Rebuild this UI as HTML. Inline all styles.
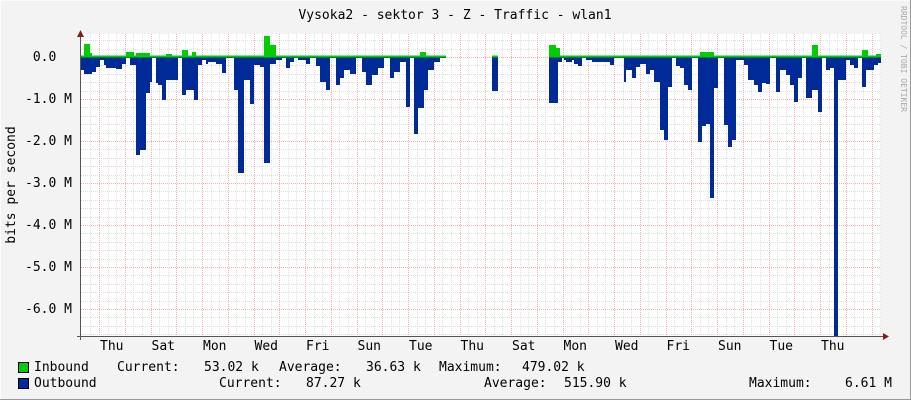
<!DOCTYPE html>
<html><head><meta charset="utf-8"><style>
html,body{margin:0;padding:0}
body{width:911px;height:400px;background:#f3f3f3;position:relative;overflow:hidden;font-family:"DejaVu Sans Mono","Liberation Mono",monospace;color:#000}
.t{position:absolute;font-size:13px;line-height:13px;white-space:pre}
</style></head><body>
<svg id="g" width="911" height="400" style="position:absolute;left:0;top:0" xmlns="http://www.w3.org/2000/svg">
<rect x="0" y="0" width="911" height="400" fill="#f3f3f3"/>
<rect x="0.5" y="0.5" width="910" height="399" fill="none" stroke="#fcfcfc"/>
<line x1="0" y1="399.5" x2="911" y2="399.5" stroke="#999"/>
<line x1="910.5" y1="0" x2="910.5" y2="400" stroke="#999"/>
<rect x="81" y="34" width="800" height="302" fill="#fff"/>
<g id="grid"></g>
<path id="out" fill="#002a97"/>
<path id="inb" fill="#00cc00"/>
<line x1="81" y1="56.5" x2="446" y2="56.5" stroke="#00cc00" stroke-width="2"/>
<line x1="492" y1="56.5" x2="498" y2="56.5" stroke="#00cc00" stroke-width="2"/>
<line x1="549" y1="56.5" x2="881" y2="56.5" stroke="#00cc00" stroke-width="2"/>
<line x1="80.5" y1="32" x2="80.5" y2="340" stroke="#555"/>
<line x1="77" y1="336.5" x2="884" y2="336.5" stroke="#555"/>
<polygon points="77,37 84,37 80.5,30" fill="#8b1a1a"/>
<polygon points="883,333 883,340 889,336.5" fill="#8b1a1a"/>
<text x="455" y="19" font-family="DejaVu Sans Mono, monospace" font-size="13" text-anchor="middle">Vysoka2 - sektor 3 - Z - Traffic - wlan1</text>
<text transform="translate(15,185) rotate(-90)" font-family="DejaVu Sans Mono, monospace" font-size="13" text-anchor="middle">bits per second</text>
<text transform="translate(901,6) rotate(90)" font-family="DejaVu Sans Mono, monospace" font-size="8" fill="#aaa">RRDTOOL / TOBI OETIKER</text>
<rect x="18.5" y="362.5" width="10" height="10" fill="#00cc00" stroke="#000"/>
<rect x="18.5" y="378.5" width="10" height="10" fill="#002a97" stroke="#000"/>
</svg>
<div class="t" style="left:34px;top:361px">Inbound</div>
<div class="t" style="left:117px;top:361px">Current:</div>
<div class="t" style="left:204px;top:361px">53.02 k</div>
<div class="t" style="left:279px;top:361px">Average:</div>
<div class="t" style="left:366px;top:361px">36.63 k</div>
<div class="t" style="left:439px;top:361px">Maximum:</div>
<div class="t" style="left:522px;top:361px">479.02 k</div>
<div class="t" style="left:34px;top:377px">Outbound</div>
<div class="t" style="left:219px;top:377px">Current:</div>
<div class="t" style="left:306px;top:377px">87.27 k</div>
<div class="t" style="left:484px;top:377px">Average:</div>
<div class="t" style="left:564px;top:377px">515.90 k</div>
<div class="t" style="left:749px;top:377px">Maximum:</div>
<div class="t" style="left:845px;top:377px">6.61 M</div>
<div id="labels"></div>
<script>
var NS="http://www.w3.org/2000/svg",g=document.getElementById("grid");
function ln(x1,y1,x2,y2,c){var l=document.createElementNS(NS,"line");l.setAttribute("x1",x1);l.setAttribute("y1",y1);l.setAttribute("x2",x2);l.setAttribute("y2",y2);l.setAttribute("stroke",c);l.setAttribute("stroke-dasharray","1,1");g.appendChild(l);}
for(var k=-3;k<40;k++){var y=57+8.4*k;if(y<34||y>335)continue;ln(81,Math.round(y)+.5,881,Math.round(y)+.5,k%5==0?"#f4b0b0":"#e0e0e0");}
for(var k=-2;k<100;k++){var x=99+25.75*k/3;if(x<82||x>881)continue;ln(Math.round(x)+.5,34,Math.round(x)+.5,336,k%3==0?"#f4b0b0":"#e0e0e0");}
var L=document.getElementById("labels"),h="";
var yl=["0.0  ","-1.0 M","-2.0 M","-3.0 M","-4.0 M","-5.0 M","-6.0 M"];
for(var i=0;i<7;i++)h+='<div class="t" style="right:839px;top:'+(51+42*i)+'px">'+yl[i]+'</div>';
var d=["Thu","Sat","Mon","Wed","Fri","Sun","Tue","Thu","Sat","Mon","Wed","Fri","Sun","Tue","Thu"];
for(var i=0;i<15;i++)h+='<div class="t" style="left:'+(112+51.5*i-12)+'px;top:340px">'+d[i]+'</div>';
L.innerHTML=h;
var o=[[81,70],[84,74],[92,72],[96,67],[100,60],[104,65],[106,68],[116,69],[122,64],[126,58],[130,65],[136,155],[140,150],[146,93],[150,82],[152,58],[156,83],[158,85],[162,100],[166,80],[178,58],[182,95],[186,90],[194,100],[198,65],[202,60],[206,64],[208,62],[216,64],[222,73],[226,58],[234,90],[238,173],[244,80],[250,104],[254,65],[260,67],[264,163],[270,64],[276,60],[282,58],[286,68],[290,62],[294,58],[298,60],[306,64],[310,58],[316,66],[320,82],[326,90],[330,58],[336,85],[340,78],[344,70],[350,74],[356,58],[362,72],[366,85],[372,75],[378,68],[384,58],[390,78],[394,72],[400,62],[406,107],[410,58],[414,134],[418,108],[424,90],[428,70],[434,62],[440,58],[446,57],[492,91],[498,57],[549,103],[558,62],[562,58],[564,60],[566,62],[572,60],[574,64],[578,66],[582,58],[586,60],[592,62],[610,65],[614,58],[624,82],[626,70],[632,78],[636,67],[640,64],[646,74],[650,70],[654,82],[660,130],[664,140],[668,87],[672,58],[676,66],[680,68],[684,85],[688,90],[692,58],[698,142],[702,126],[706,124],[710,198],[714,88],[718,58],[724,125],[728,147],[732,140],[736,60],[744,65],[748,80],[754,85],[758,92],[762,83],[766,84],[770,58],[776,92],[780,70],[786,75],[790,85],[794,102],[798,78],[802,58],[806,98],[812,90],[818,112],[822,58],[826,70],[830,68],[834,336],[838,80],[846,60],[850,65],[854,68],[858,58],[862,87],[866,70],[874,65],[878,63],[881,57]];
var p="M81 57";for(var i=0;i<o.length;i++){p+=" V"+o[i][1];var nx=i+1<o.length?o[i+1][0]:881;p+=" H"+nx;}p+=" V57 Z";
document.getElementById("out").setAttribute("d",p);
var n=[[84,90,44],[90,92,53],[126,134,52],[136,150,53],[166,172,54],[182,188,50],[192,196,52],[264,270,36],[270,276,45],[420,426,52],[549,556,45],[556,560,48],[700,714,52],[812,818,45],[862,868,50],[876,881,54]];
var q="";for(var i=0;i<n.length;i++)q+="M"+n[i][0]+" 57 V"+n[i][2]+" H"+n[i][1]+" V57 Z ";
document.getElementById("inb").setAttribute("d",q);
</script>
</body></html>
